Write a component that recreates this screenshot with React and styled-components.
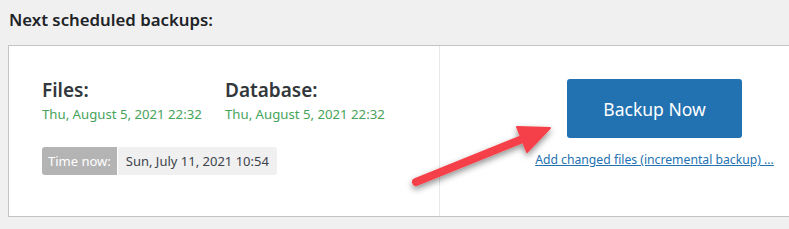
import React from "react";
import styled, { createGlobalStyle } from "styled-components";

const Global = createGlobalStyle`
  html, body { margin: 0; padding: 0; background: #f0f0f1; overflow: hidden; }
  body { font-family: "Noto Sans", "Open Sans", Arial, sans-serif; color: #1d2327; }
`;

const Page = styled.div`
  position: relative;
  width: 789px;
  height: 229px;
  overflow: hidden;
  padding: 8px 0 0 8px;
  box-sizing: border-box;
`;

const Heading = styled.h3`
  margin: 0 0 13px 1px;
  font-size: 16.8px;
  font-weight: 600;
  line-height: 24px;
  color: #1d2327;
`;

const Card = styled.div`
  width: 862px;
  height: 172px;
  box-sizing: border-box;
  background: #fff;
  border: 1px solid #c3c4c7;
  display: grid;
  grid-template-columns: 431px 1fr;
`;

const Left = styled.div`
  border-right: 1px solid #e8e8e8;
  padding: 31px 0 0 33px;
`;

const Schedules = styled.div`
  display: flex;
`;

const Schedule = styled.div`
  width: 183px;
`;

const Label = styled.div`
  font-size: 19px;
  font-weight: 600;
  line-height: 26px;
  color: #32373c;
`;

const DateText = styled.div`
  font-size: 13.2px;
  line-height: 18px;
  margin-top: 2px;
  color: #46a35a;
`;

const NowBadge = styled.div`
  display: inline-flex;
  margin-top: 24px;
  height: 28px;
  border-radius: 3px;
  overflow: hidden;
  font-size: 13px;
  line-height: 28px;
`;

const NowLabel = styled.span`
  background: #b4b4b4;
  color: #fff;
  padding: 0 6px;
  border-right: 1px solid #fff;
`;

const NowValue = styled.span`
  background: #f0f0f1;
  color: #3c434a;
  padding: 0 8px;
`;

const Right = styled.div`
  display: flex;
  flex-direction: column;
  align-items: center;
  padding-top: 33px;
`;

const BackupButton = styled.button`
  width: 175px;
  height: 59px;
  border: none;
  border-radius: 3px;
  background: #2271b1;
  color: #fff;
  font-family: inherit;
  font-size: 17.5px;
  cursor: pointer;
`;

const Link = styled.a`
  margin-top: 13px;
  font-size: 12.2px;
  line-height: 18px;
  color: #2271b1;
  text-decoration: underline;
`;

const ArrowSvg = styled.svg`
  position: absolute;
  left: 400px;
  top: 115px;
  overflow: visible;
`;

export default function App() {
  return (
    <>
      <Global />
      <Page>
        <Heading>Next scheduled backups:</Heading>
        <Card>
          <Left>
            <Schedules>
              <Schedule>
                <Label>Files:</Label>
                <DateText>Thu, August 5, 2021 22:32</DateText>
              </Schedule>
              <Schedule>
                <Label>Database:</Label>
                <DateText>Thu, August 5, 2021 22:32</DateText>
              </Schedule>
            </Schedules>
            <NowBadge>
              <NowLabel>Time now:</NowLabel>
              <NowValue>Sun, July 11, 2021 10:54</NowValue>
            </NowBadge>
          </Left>
          <Right>
            <BackupButton>Backup Now</BackupButton>
            <Link href="#">Add changed files (incremental backup) ...</Link>
          </Right>
        </Card>
        <ArrowSvg width="170" height="90" viewBox="0 0 170 90">
          <defs>
            <filter id="sh" x="-20%" y="-20%" width="140%" height="160%">
              <feDropShadow dx="0" dy="3" stdDeviation="3" floodColor="#000" floodOpacity="0.45" />
            </filter>
          </defs>
          <g filter="url(#sh)">
            <line x1="16" y1="67" x2="120" y2="25" stroke="#f5414a" strokeWidth="8" strokeLinecap="round" />
            <polygon points="150,13 117,12 127,37" fill="#f5414a" stroke="#f5414a" strokeWidth="2" strokeLinejoin="round" />
          </g>
        </ArrowSvg>
      </Page>
    </>
  );
}
